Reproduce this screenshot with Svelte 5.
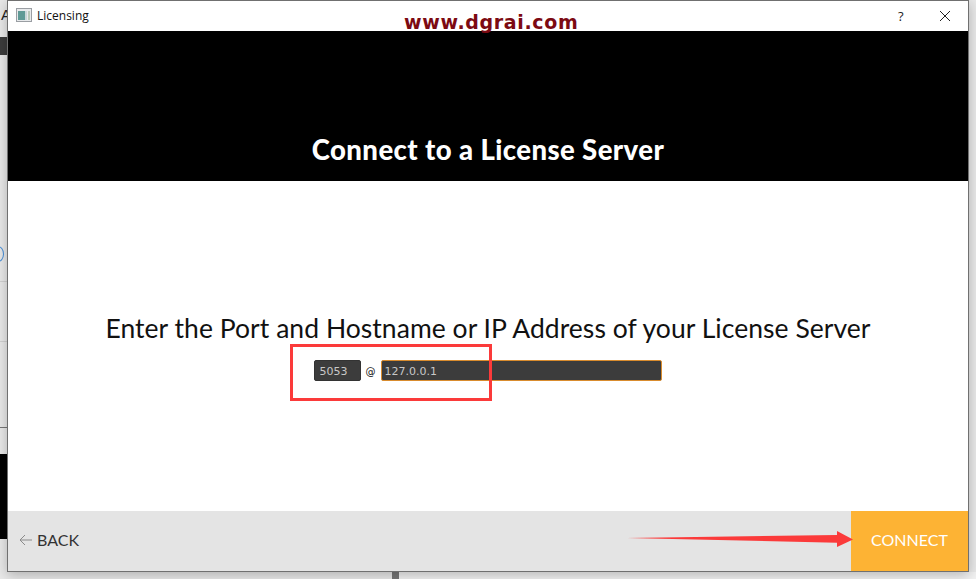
<script>
  let port = "5053";
  let host = "127.0.0.1";
</script>

<div class="desktop">
  <!-- what shows of the app behind the dialog -->
  <div class="behind">
    <span class="behind-letter">A</span>
    <span class="behind-dark"></span>
    <span class="behind-ring"></span>
    <span class="behind-rule r1"></span>
    <span class="behind-rule r2"></span>
    <span class="behind-rule r3"></span>
    <span class="behind-black"></span>
    <span class="behind-tick"></span>
    <span class="behind-pane"></span>
  </div>

  <div class="dialog">
    <header class="titlebar">
      <svg class="appicon" width="16" height="14" viewBox="0 0 16 14">
        <rect x="0.5" y="0.5" width="15" height="13" fill="#e8eaec" stroke="#9a9ea3" />
        <rect x="2" y="3" width="7" height="9" fill="#5f9a96" />
        <rect x="9" y="3" width="2" height="9" fill="#c9d6d8" />
        <rect x="12" y="3" width="2" height="9" fill="#b9c8b9" />
      </svg>
      <span class="title">Licensing</span>
      <span class="watermark">www.dgrai.com</span>
      <span class="help">?</span>
      <svg class="close" width="12" height="12" viewBox="0 0 12 12">
        <path d="M1 1 L11 11 M11 1 L1 11" stroke="#222" stroke-width="1" fill="none" />
      </svg>
    </header>

    <section class="banner">
      <h1>Connect to a License Server</h1>
    </section>

    <main class="body">
      <p class="prompt">Enter the Port and Hostname or IP Address of your License Server</p>
      <div class="fields">
        <input class="port" bind:value={port} aria-label="Port" />
        <span class="at">@</span>
        <input class="host" bind:value={host} aria-label="Hostname" />
      </div>
      <span class="redbox"></span>
    </main>

    <footer class="actions">
      <button class="back">
        <svg width="14" height="12" viewBox="0 0 14 12">
          <path d="M13 6 H1 M6 1 L1 6 L6 11" stroke="#8a8a8a" stroke-width="1" fill="none" />
        </svg>
        BACK
      </button>
      <button class="connect">CONNECT</button>
      <svg class="arrow" width="228" height="24" viewBox="0 0 228 24">
        <path d="M0 13 L210 10 L210 6 L226 14.5 L210 22 L210 17.7 Z" fill="#fb3a3a" />
      </svg>
    </footer>
  </div>
</div>

<style>
  :global(body) {
    margin: 0;
    background: #fff;
  }
  .desktop {
    position: relative;
    width: 976px;
    height: 579px;
    overflow: hidden;
    background: #e9e9e9;
    font-family: "Lato", "Open Sans", sans-serif;
  }
  .behind {
    position: absolute;
    inset: 0;
  }
  .behind-letter {
    position: absolute;
    left: 1px;
    top: 6px;
    font: 15px "Liberation Sans", sans-serif;
    color: #222;
  }
  .behind-dark {
    position: absolute;
    left: 0;
    top: 37px;
    width: 8px;
    height: 18px;
    background: #3c3c3c;
  }
  .behind-ring {
    position: absolute;
    left: -8px;
    top: 246px;
    width: 10px;
    height: 14px;
    border: 1px solid #4a90d9;
    border-radius: 50%;
  }
  .behind-rule {
    position: absolute;
    left: 0;
    width: 8px;
    height: 1px;
    background: #d2d2d2;
  }
  .r1 { top: 281px; }
  .r2 { top: 341px; }
  .r3 { top: 427px; background: #777; }
  .behind-black {
    position: absolute;
    left: 0;
    top: 454px;
    width: 8px;
    height: 85px;
    background: #000;
  }
  .behind-tick {
    position: absolute;
    left: 392px;
    bottom: 0;
    width: 7px;
    height: 7px;
    background: #777;
  }
  .behind-pane {
    position: absolute;
    left: 399px;
    right: 0;
    bottom: 0;
    height: 7px;
    background: #f2f2f2;
  }
  .dialog {
    position: absolute;
    left: 7px;
    top: 0;
    width: 960px;
    height: 570px;
    display: flex;
    flex-direction: column;
    background: #fff;
    border: 1px solid #707070;
    box-shadow: 0 3px 12px rgba(0, 0, 0, 0.25);
  }
  .titlebar {
    position: relative;
    flex: 0 0 30px;
    display: flex;
    align-items: center;
    padding: 0 0 2px 8px;
    box-sizing: border-box;
    background: #fff;
    font-family: "Open Sans", sans-serif;
  }
  .appicon {
    margin-right: 5px;
  }
  .title {
    font-size: 12px;
    color: #111;
  }
  .watermark {
    position: absolute;
    left: 396px;
    top: 10px;
    font: bold 19px/22px "DejaVu Sans", sans-serif;
    color: #7c0a12;
    letter-spacing: 0.65px;
  }
  .help {
    position: absolute;
    left: 890px;
    top: 6px;
    font-size: 13px;
    color: #222;
  }
  .close {
    position: absolute;
    left: 931px;
    top: 9px;
  }
  .banner {
    flex: 0 0 150px;
    display: flex;
    align-items: flex-end;
    justify-content: center;
    background: #000;
  }
  h1 {
    margin: 0 0 16px;
    font-size: 27.5px;
    line-height: 30px;
    font-weight: 900;
    color: #fff;
    letter-spacing: 0.42px;
  }
  .body {
    position: relative;
    flex: 1;
    display: flex;
    flex-direction: column;
    align-items: center;
    padding-top: 132px;
  }
  .prompt {
    margin: 0;
    font-size: 26.5px;
    line-height: 30px;
    letter-spacing: 0.04px;
    color: #111;
  }
  .fields {
    display: flex;
    align-items: center;
    gap: 5px;
    margin-top: 17px;
    margin-left: -1px;
  }
  input {
    box-sizing: border-box;
    height: 21px;
    padding: 1px 5px 0;
    font: 11px "DejaVu Sans", sans-serif;
    color: #c8c8c8;
    background: #3c3c3c;
    border-radius: 2px;
    outline: none;
  }
  .port {
    width: 47px;
    border: 1px solid #333;
  }
  .at {
    width: 10px;
    padding-top: 1px;
    text-align: center;
    font: 10px "DejaVu Sans", sans-serif;
    color: #111;
  }
  .host {
    width: 281px;
    padding-left: 3px;
    border: 1px solid #d98c2e;
  }
  .redbox {
    position: absolute;
    left: 282px;
    top: 163px;
    width: 196px;
    height: 51px;
    border: 3px solid #fb3a3a;
  }
  .actions {
    position: relative;
    flex: 0 0 60px;
    display: flex;
    justify-content: space-between;
    background: #e4e4e4;
  }
  button {
    border: 0;
    font-family: inherit;
    font-size: 16px;
  }
  .back {
    display: flex;
    align-items: center;
    gap: 4px;
    padding: 0 0 3px 11px;
    background: none;
    color: #333;
  }
  .connect {
    width: 117px;
    padding: 0 0 3px;
    background: #fdb334;
    color: #fff;
  }
  .arrow {
    position: absolute;
    left: 619px;
    top: 14px;
  }
</style>
